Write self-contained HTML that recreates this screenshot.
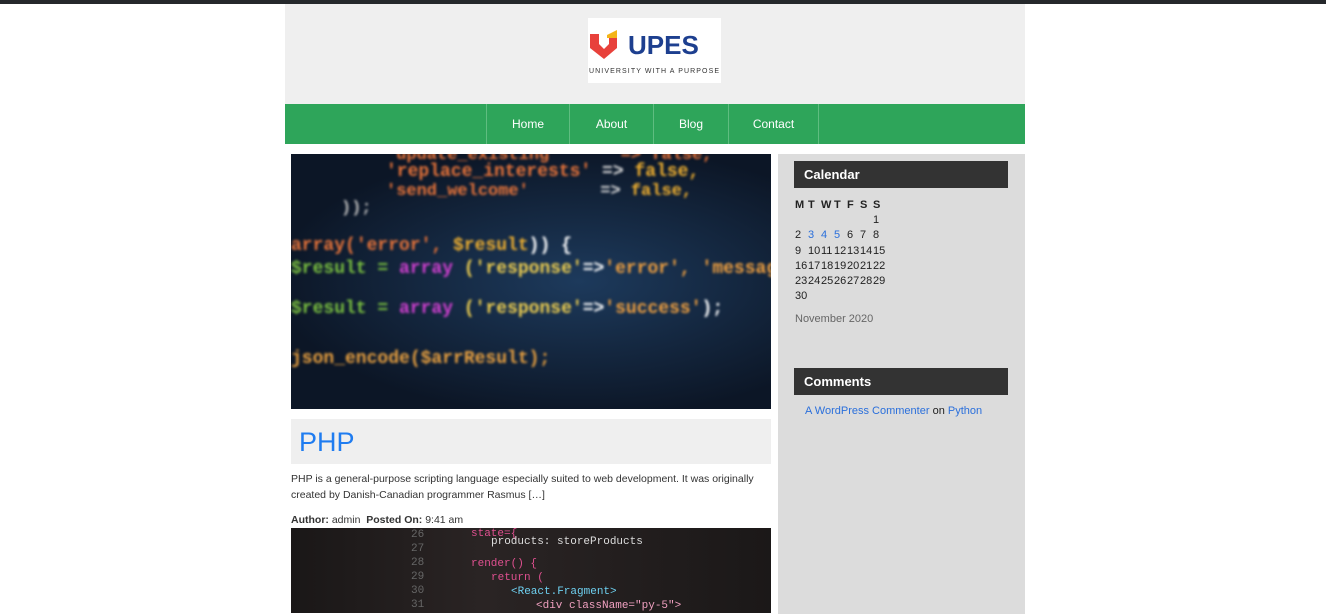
<!DOCTYPE html><html><head><meta charset="utf-8"><style>
*{margin:0;padding:0;box-sizing:border-box}
body{width:1326px;height:609px;overflow:hidden;background:#fff;font-family:"Liberation Sans",sans-serif;position:relative}
.top{position:absolute;left:0;top:0;width:1326px;height:4px;background:#25282b}
.wrap{position:absolute;left:285px;top:4px;width:740px;height:605px;background:#fff}
.head{height:100px;background:#efefef;position:relative}
.logo{position:absolute;left:303px;top:14px;width:133px;height:65px;background:#fff}
.nav{height:40px;background:#2ea55a;position:relative}
.nav a{position:absolute;top:0;height:40px;line-height:40px;color:#fff;font-size:12px;text-decoration:none;text-align:center;border-left:1px solid #5fbd80}
.side{position:absolute;left:493px;top:150px;width:247px;height:460px;background:#dcdcdc}
.wt{position:absolute;left:16px;width:214px;height:27px;background:#333;color:#fff;font-weight:bold;font-size:13px;line-height:27px;padding-left:10px}
.cal{position:absolute;left:17px;top:44px;font-size:11px;color:#222;line-height:15.2px}
.cal span{display:inline-block;width:13px}
.b{color:#2a6fdb}
.img1{position:absolute;left:6px;top:150px;width:480px;height:255px;background:radial-gradient(ellipse at 60% 50%,#1d3a5c,#0c1626 75%);overflow:hidden;font-family:"Liberation Mono",monospace;font-weight:bold}
.img1 div{position:absolute;white-space:pre;filter:blur(1.2px)}
.img2{position:absolute;left:6px;top:524px;width:480px;height:85px;background:linear-gradient(90deg,#1a1717,#2a2424 40%,#1b1818);overflow:hidden;font-family:"Liberation Mono",monospace;font-size:11px;color:#ddd}
.img2 div{position:absolute;white-space:pre}
.title{position:absolute;left:6px;top:415px;width:480px;height:45px;background:#efefef;color:#1f7cf0;font-size:27px;padding:8px 0 0 8px}
.ex{position:absolute;left:6px;top:467px;width:480px;font-size:10.5px;line-height:16px;color:#333}
.meta{position:absolute;left:6px;top:510px;font-size:10.5px;color:#333}
</style></head><body>
<div class="top"></div>
<div class="wrap">
<div class="head"><div class="logo">
<svg width="133" height="65" viewBox="0 0 133 65"><path d="M2 16h9v10l5 5 5-5v-6h8v10l-13 11-14-11z" fill="#e8413b"/><path d="M19 17l10-5v8h-10z" fill="#f4b418"/><text x="40" y="36" font-family="Liberation Sans" font-weight="bold" font-size="26" fill="#1d3f8f">UPES</text><text x="1" y="55" font-family="Liberation Sans" font-size="7" fill="#333" textLength="130">UNIVERSITY WITH A PURPOSE</text></svg></div></div>
<div class="nav">
<a style="left:201px;width:83px">Home</a><a style="left:284px;width:84px">About</a><a style="left:368px;width:75px">Blog</a><a style="left:443px;width:91px;border-right:1px solid #5fbd80">Contact</a></div>
<div class="img1">
<div style="left:95px;top:-8px;color:#e8743a;font-size:17px">'update_existing'      => false,</div>
<div style="left:95px;top:8px;color:#e8743a;font-size:18px">'replace_interests' <span style="color:#ddd">=></span> <span style="color:#f0b030">false,</span></div>
<div style="left:95px;top:28px;color:#e8743a;font-size:17px">'send_welcome'       <span style="color:#ddd">=></span> <span style="color:#f0b030">false,</span></div>
<div style="left:50px;top:45px;color:#bbb;font-size:17px">));</div>
<div style="left:0px;top:82px;color:#e8743a;font-size:18px">array(<span style="color:#e8743a">'error'</span>, <span style="color:#f0b030">$result</span><span style="color:#fff">)) {</span></div>
<div style="left:0px;top:105px;color:#7ac040;font-size:18px">$result = <span style="color:#d040d0">array</span> <span style="color:#f0d050">('response'</span><span style="color:#fff">=></span><span style="color:#f0a040">'error', 'message</span></div>
<div style="left:0px;top:145px;color:#7ac040;font-size:18px">$result = <span style="color:#d040d0">array</span> <span style="color:#f0d050">('response'</span><span style="color:#fff">=></span><span style="color:#f0a040">'success'</span><span style="color:#fff">);</span></div>
<div style="left:0px;top:195px;color:#e8a040;font-size:18px">json_encode($arrResult);</div>
</div>
<div class="title">PHP</div>
<div class="ex">PHP is a general-purpose scripting language especially suited to web development. It was originally created by Danish-Canadian programmer Rasmus […]</div>
<div class="meta"><b>Author:</b> admin &nbsp;<b>Posted On:</b> 9:41 am</div>
<div class="img2">
<div style="left:180px;top:0px;color:#e05090">state={</div>
<div style="left:200px;top:8px">products: storeProducts</div>
<div style="left:180px;top:30px;color:#e05090">render() {</div>
<div style="left:200px;top:44px;color:#e05090">return (</div>
<div style="left:220px;top:58px;color:#6ed0f0">&lt;React.Fragment&gt;</div>
<div style="left:245px;top:72px;color:#f0a0c0">&lt;div className="py-5"&gt;</div>
<div style="left:120px;top:0;color:#666;line-height:14px">26<br>27<br>28<br>29<br>30<br>31</div>
</div>
<div class="side">
<div class="wt" style="top:7px">Calendar</div>
<div class="cal"><b><span>M</span><span>T</span><span>W</span><span>T</span><span>F</span><span>S</span><span>S</span></b><br>
<span></span><span></span><span></span><span></span><span></span><span></span><span>1</span><br>
<span>2</span><span class="b">3</span><span class="b">4</span><span class="b">5</span><span>6</span><span>7</span><span>8</span><br>
<span>9</span><span>10</span><span>11</span><span>12</span><span>13</span><span>14</span><span>15</span><br>
<span>16</span><span>17</span><span>18</span><span>19</span><span>20</span><span>21</span><span>22</span><br>
<span>23</span><span>24</span><span>25</span><span>26</span><span>27</span><span>28</span><span>29</span><br>
<span>30</span><br>
<div style="color:#666;margin-top:8px">November 2020</div></div>
<div class="wt" style="top:214px">Comments</div>
<div style="position:absolute;left:27px;top:251px;font-size:11px;color:#222"><span class="b">A WordPress Commenter</span> on <span class="b">Python</span></div>
</div>
</div>
</body></html>
